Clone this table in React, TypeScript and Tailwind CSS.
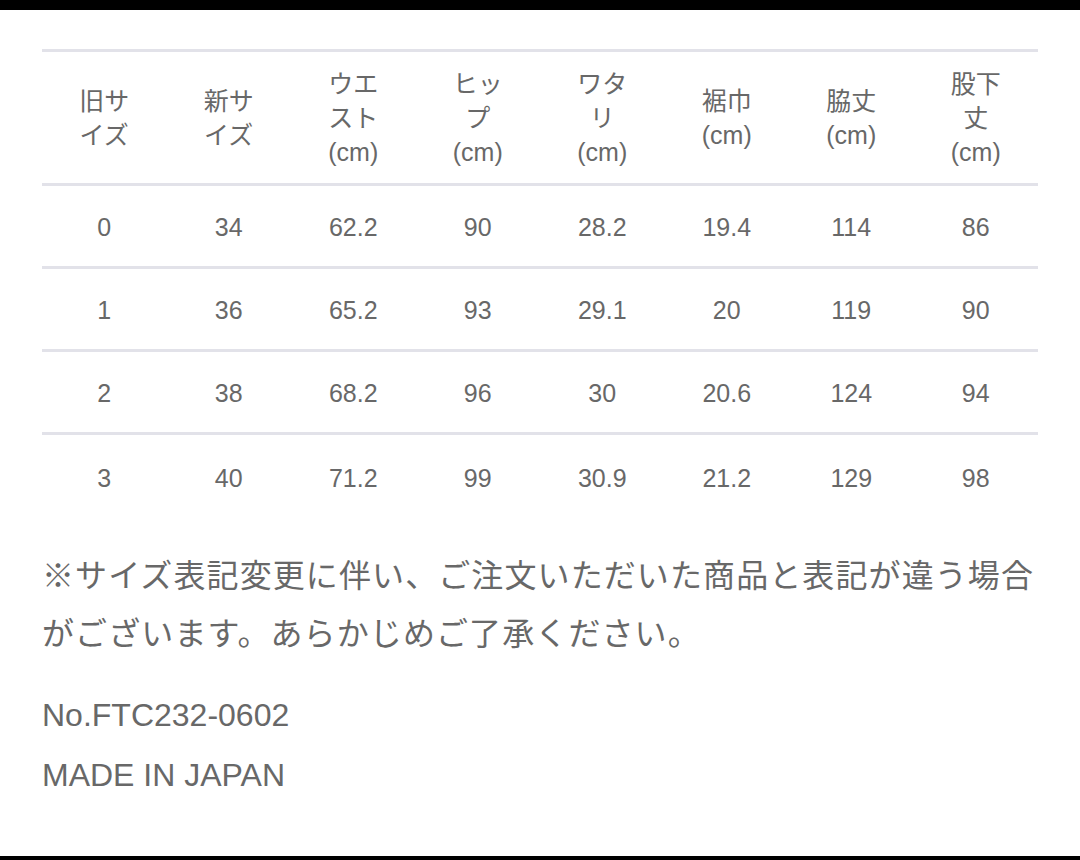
import React from "react";

const headers: string[][] = [
  ["旧サ", "イズ"],
  ["新サ", "イズ"],
  ["ウエ", "スト", "(cm)"],
  ["ヒッ", "プ", "(cm)"],
  ["ワタ", "リ", "(cm)"],
  ["裾巾", "(cm)"],
  ["脇丈", "(cm)"],
  ["股下", "丈", "(cm)"],
];

const rows: string[][] = [
  ["0", "34", "62.2", "90", "28.2", "19.4", "114", "86"],
  ["1", "36", "65.2", "93", "29.1", "20", "119", "90"],
  ["2", "38", "68.2", "96", "30", "20.6", "124", "94"],
  ["3", "40", "71.2", "99", "30.9", "21.2", "129", "98"],
];

const font = { fontFamily: '"Liberation Sans", "Noto Sans CJK JP", sans-serif' };

export default function App() {
  return (
    <div className="w-[1080px] h-[860px] bg-white flex flex-col text-[#686868]" style={font}>
      <div className="h-[10px] bg-black shrink-0" />
      <div className="flex-1 flex flex-col px-[42px] pt-[39px]">
        <div className="border-t-[3px] border-[#e2e2e9]">
          <div className="grid grid-cols-8 h-[134px] border-b-[3px] border-[#e2e2e9]">
            {headers.map((h, i) => (
              <div key={i} className="flex flex-col items-center justify-center text-[25px] leading-[34px]">
                {h.map((l, j) => (
                  <span key={j}>{l}</span>
                ))}
              </div>
            ))}
          </div>
          {rows.map((r, i) => (
            <div
              key={i}
              className={
                "grid grid-cols-8 h-[83px] " +
                (i < rows.length - 1 ? "border-b-[3px] border-[#e2e2e9]" : "")
              }
            >
              {r.map((c, j) => (
                <div key={j} className="flex items-center justify-center pt-[4px] text-[25px]">
                  {c}
                </div>
              ))}
            </div>
          ))}
        </div>
        <p className="mt-[29px] text-[32px] leading-[58px] tracking-[1.1px] whitespace-nowrap">
          ※サイズ表記変更に伴い、ご注文いただいた商品と表記が違う場合
          <br />
          がございます。あらかじめご了承ください。
        </p>
        <p className="mt-[22px] text-[32px] leading-[60px]">No.FTC232-0602</p>
        <p className="text-[32px] leading-[60px]">MADE IN JAPAN</p>
      </div>
      <div className="h-[4px] bg-black shrink-0" />
    </div>
  );
}
